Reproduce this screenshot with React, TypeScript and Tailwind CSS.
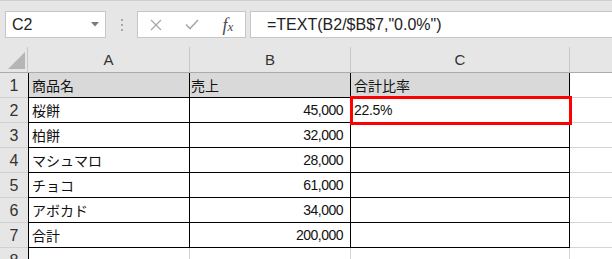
import React from 'react'

const rows = [
  { n: 1, a: '商品名', b: '売上', c: '合計比率', head: true },
  { n: 2, a: '桜餅', b: '45,000', c: '22.5%' },
  { n: 3, a: '柏餅', b: '32,000', c: '' },
  { n: 4, a: 'マシュマロ', b: '28,000', c: '' },
  { n: 5, a: 'チョコ', b: '61,000', c: '' },
  { n: 6, a: 'アボカド', b: '34,000', c: '' },
  { n: 7, a: '合計', b: '200,000', c: '' },
]

const jp = "font-['Noto_Sans_CJK_JP',sans-serif]"
const lat = "font-['Liberation_Sans','Noto_Sans_CJK_JP',sans-serif]"

function Toolbar() {
  return (
    <div className="flex h-[47px] items-start border-t border-[#cfcfcf] bg-[#e6e6e6] pt-[10px]">
      {/* name box */}
      <div className="ml-[5px] flex h-[27px] w-[101px] items-center justify-between border border-[#c6c6c6] bg-white pl-[6px] pr-[6px]">
        <span className={`${lat} text-[16px] text-[#222]`}>C2</span>
        <svg width="8" height="5" viewBox="0 0 8 5">
          <polygon points="0,0 8,0 4,4.5" fill="#7a7a7a" />
        </svg>
      </div>
      <div className="flex h-[27px] w-[31px] flex-col items-center justify-center gap-[3px]">
        <div className="h-[2px] w-[2px] bg-[#a8a8a8]" />
        <div className="h-[2px] w-[2px] bg-[#a8a8a8]" />
        <div className="h-[2px] w-[2px] bg-[#a8a8a8]" />
      </div>
      {/* cancel / enter / fx */}
      <div className="flex h-[27px] w-[109px] items-center border border-[#c6c6c6] bg-white">
        <div className="flex w-[36px] justify-center">
          <svg width="12" height="12" viewBox="0 0 12 12">
            <path d="M1 1 L11 11 M11 1 L1 11" stroke="#a9a9a9" strokeWidth="1.3" fill="none" />
          </svg>
        </div>
        <div className="flex w-[35px] justify-center">
          <svg width="14" height="11" viewBox="0 0 14 11">
            <path d="M1 5.5 L5 9.5 L13 1" stroke="#a9a9a9" strokeWidth="1.6" fill="none" />
          </svg>
        </div>
        <div className="flex w-[35px] justify-center pl-[3px]">
          <span className="font-['Liberation_Serif',serif] text-[18px] italic leading-none text-[#4a4a4a]">
            f<span className="text-[13px]">x</span>
          </span>
        </div>
      </div>
      {/* formula input */}
      <div className="ml-[4px] mr-[-4px] flex h-[27px] flex-1 items-center border border-[#c6c6c6] bg-white pl-[16px]">
        <span className={`${lat} text-[16px] text-[#222]`}>=TEXT(B2/$B$7,"0.0%")</span>
      </div>
    </div>
  )
}

export default function App() {
  return (
    <div className="h-[259px] w-[612px] overflow-hidden bg-white">
      <Toolbar />
      <div className="grid w-[712px] grid-cols-[28px_162px_161px_219px_142px]">
        {/* column header row */}
        <div className="relative h-[26px] border-b border-r border-[#ababab] border-r-[#c8c8c8] bg-[#e6e6e6]">
          <svg className="absolute left-[8px] top-[5px]" width="18" height="17" viewBox="0 0 18 17">
            <polygon points="17,0 17,17 0,17" fill="#b5b5b5" />
          </svg>
        </div>
        {['A', 'B', 'C', 'D'].map((l) => (
          <div
            key={l}
            className={`${lat} flex h-[26px] items-center justify-center border-b border-r border-[#ababab] border-r-[#c8c8c8] bg-[#e6e6e6] pt-[2px] text-[15px] text-[#333]`}
          >
            {l}
          </div>
        ))}

        {rows.map((r) => (
          <React.Fragment key={r.n}>
            <div className={`${lat} flex h-[25px] items-center justify-center border-b border-[#d0d0d0] bg-[#e6e6e6] pt-[1px] text-[16px] text-[#333]`}>
              {r.n}
            </div>
            <div className={`${jp} flex h-[25px] items-center border-b border-l border-r border-black pl-[3px] text-[14px] text-[#111] ${r.head ? 'bg-[#d9d9d9]' : 'bg-white'}`}>
              {r.a}
            </div>
            <div
              className={`flex h-[25px] items-center border-b border-r border-black ${
                r.head ? `${jp} bg-[#d9d9d9] pl-[1px] text-[14px]` : `${lat} justify-end bg-white pr-[7px] text-[14px] tracking-[-0.5px]`
              } text-[#111]`}
            >
              {r.b}
            </div>
            <div
              className={`relative flex h-[25px] items-center border-b border-r border-black pl-[3px] text-[14px] text-[#111] ${
                r.head ? `${jp} bg-[#d9d9d9]` : `${lat} bg-white tracking-[-0.3px]`
              }`}
            >
              {r.c}
              {r.n === 2 && (
                <div className="absolute -bottom-[3px] -left-[1px] -right-[3px] -top-[2px] z-10 border-[3px] border-[#ff0000]" />
              )}
            </div>
            <div className="h-[25px] border-b border-r border-[#d4d4d4] bg-white" />
          </React.Fragment>
        ))}

        {/* row 8, clipped */}
        <div className={`${lat} flex h-[25px] items-center justify-center bg-[#e6e6e6] pt-[1px] text-[16px] text-[#333]`}>8</div>
        <div className="h-[25px] border-l border-r border-black border-r-[#d4d4d4] bg-white" />
        <div className="h-[25px] border-r border-[#d4d4d4] bg-white" />
        <div className="h-[25px] border-r border-[#d4d4d4] bg-white" />
        <div className="h-[25px] border-r border-[#d4d4d4] bg-white" />
      </div>
    </div>
  )
}
